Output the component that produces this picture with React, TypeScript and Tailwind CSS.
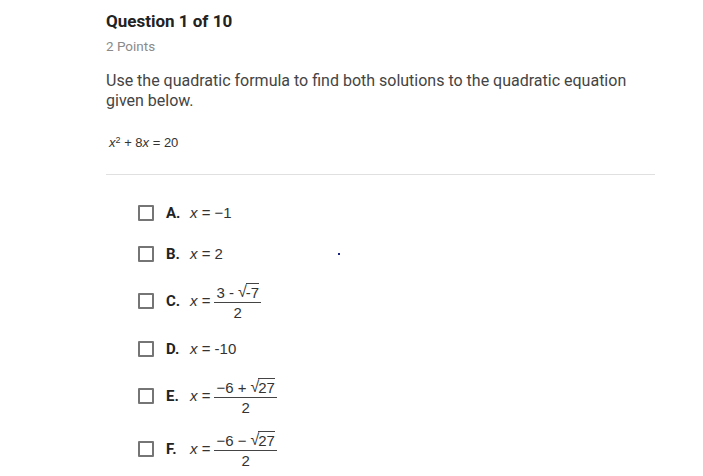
const Box = () => (
  <div className="w-[16px] h-[16px] border-2 border-[#757575] rounded-[1px] shrink-0" />
);

const Frac = ({ num, den }: { num: React.ReactNode; den: React.ReactNode }) => (
  <span className="inline-flex flex-col items-center leading-none">
    <span className="px-[2px] pb-[2px] border-b border-[#444] whitespace-nowrap">{num}</span>
    <span className="pt-[2px]">{den}</span>
  </span>
);

const Sqrt = ({ children }: { children: React.ReactNode }) => (
  <span className="inline-flex items-end">
    <span className="text-[16px] leading-none -mr-[1px]">√</span>
    <span className="border-t border-[#444] leading-none pt-[1px]">{children}</span>
  </span>
);

const X = () => <i className="font-normal">x</i>;

const options = [
  { letter: "A.", h: "h-[40px]", math: <span><X /> = −1</span> },
  { letter: "B.", h: "h-[42px]", math: <span><X /> = 2</span> },
  {
    letter: "C.",
    h: "h-[52px]",
    math: (
      <span className="flex items-center gap-1">
        <span><X /> =</span>
        <Frac num={<span className="flex items-end gap-1">3 - <Sqrt>-7</Sqrt></span>} den="2" />
      </span>
    ),
  },
  { letter: "D.", h: "h-[44px]", math: <span><X /> = -10</span> },
  {
    letter: "E.",
    h: "h-[50px]",
    math: (
      <span className="flex items-center gap-1">
        <span><X /> =</span>
        <Frac num={<span className="flex items-end gap-1">−6 + <Sqrt>27</Sqrt></span>} den="2" />
      </span>
    ),
  },
  {
    letter: "F.",
    h: "h-[56px]",
    math: (
      <span className="flex items-center gap-1">
        <span><X /> =</span>
        <Frac num={<span className="flex items-end gap-1">−6 − <Sqrt>27</Sqrt></span>} den="2" />
      </span>
    ),
  },
];

export default function App() {
  return (
    <div className="w-[703px] h-[476px] bg-white overflow-hidden font-['Roboto',sans-serif] relative">
      <div className="pl-[106px] pr-[48px] pt-[10px]">
        <h1 className="text-[17px] font-bold text-[#222] leading-[22px]">Question 1 of 10</h1>
        <div className="text-[13.5px] text-[#8a8a8a] mt-[5px] leading-[18px]">2 Points</div>
        <p className="text-[16px] text-[#444] leading-[20px] mt-[16px]">
          Use the quadratic formula to find both solutions to the quadratic equation given below.
        </p>
        <div className="mt-[24px] pl-[3px] text-[13px] text-[#333] font-['Liberation_Sans',sans-serif] leading-[16px]">
          <i>x</i>
          <sup className="text-[9px]">2</sup> + 8<i>x</i> = 20
        </div>
        <div className="mt-[23px] border-t border-[#e0e0e0]" />
        <div className="mt-[18px] pl-[32px]">
          {options.map((o) => (
            <div key={o.letter} className={`${o.h} flex items-center`}>
              <Box />
              <span className="ml-[12px] w-[24px] text-[15px] font-bold text-[#222]">{o.letter}</span>
              <span className="text-[15px] text-[#333] font-['Liberation_Sans',sans-serif]">
                {o.math}
              </span>
            </div>
          ))}
        </div>
      </div>
      <div className="absolute left-[338px] top-[253px] w-[2px] h-[2px] bg-[#1a237e]" />
    </div>
  );
}
